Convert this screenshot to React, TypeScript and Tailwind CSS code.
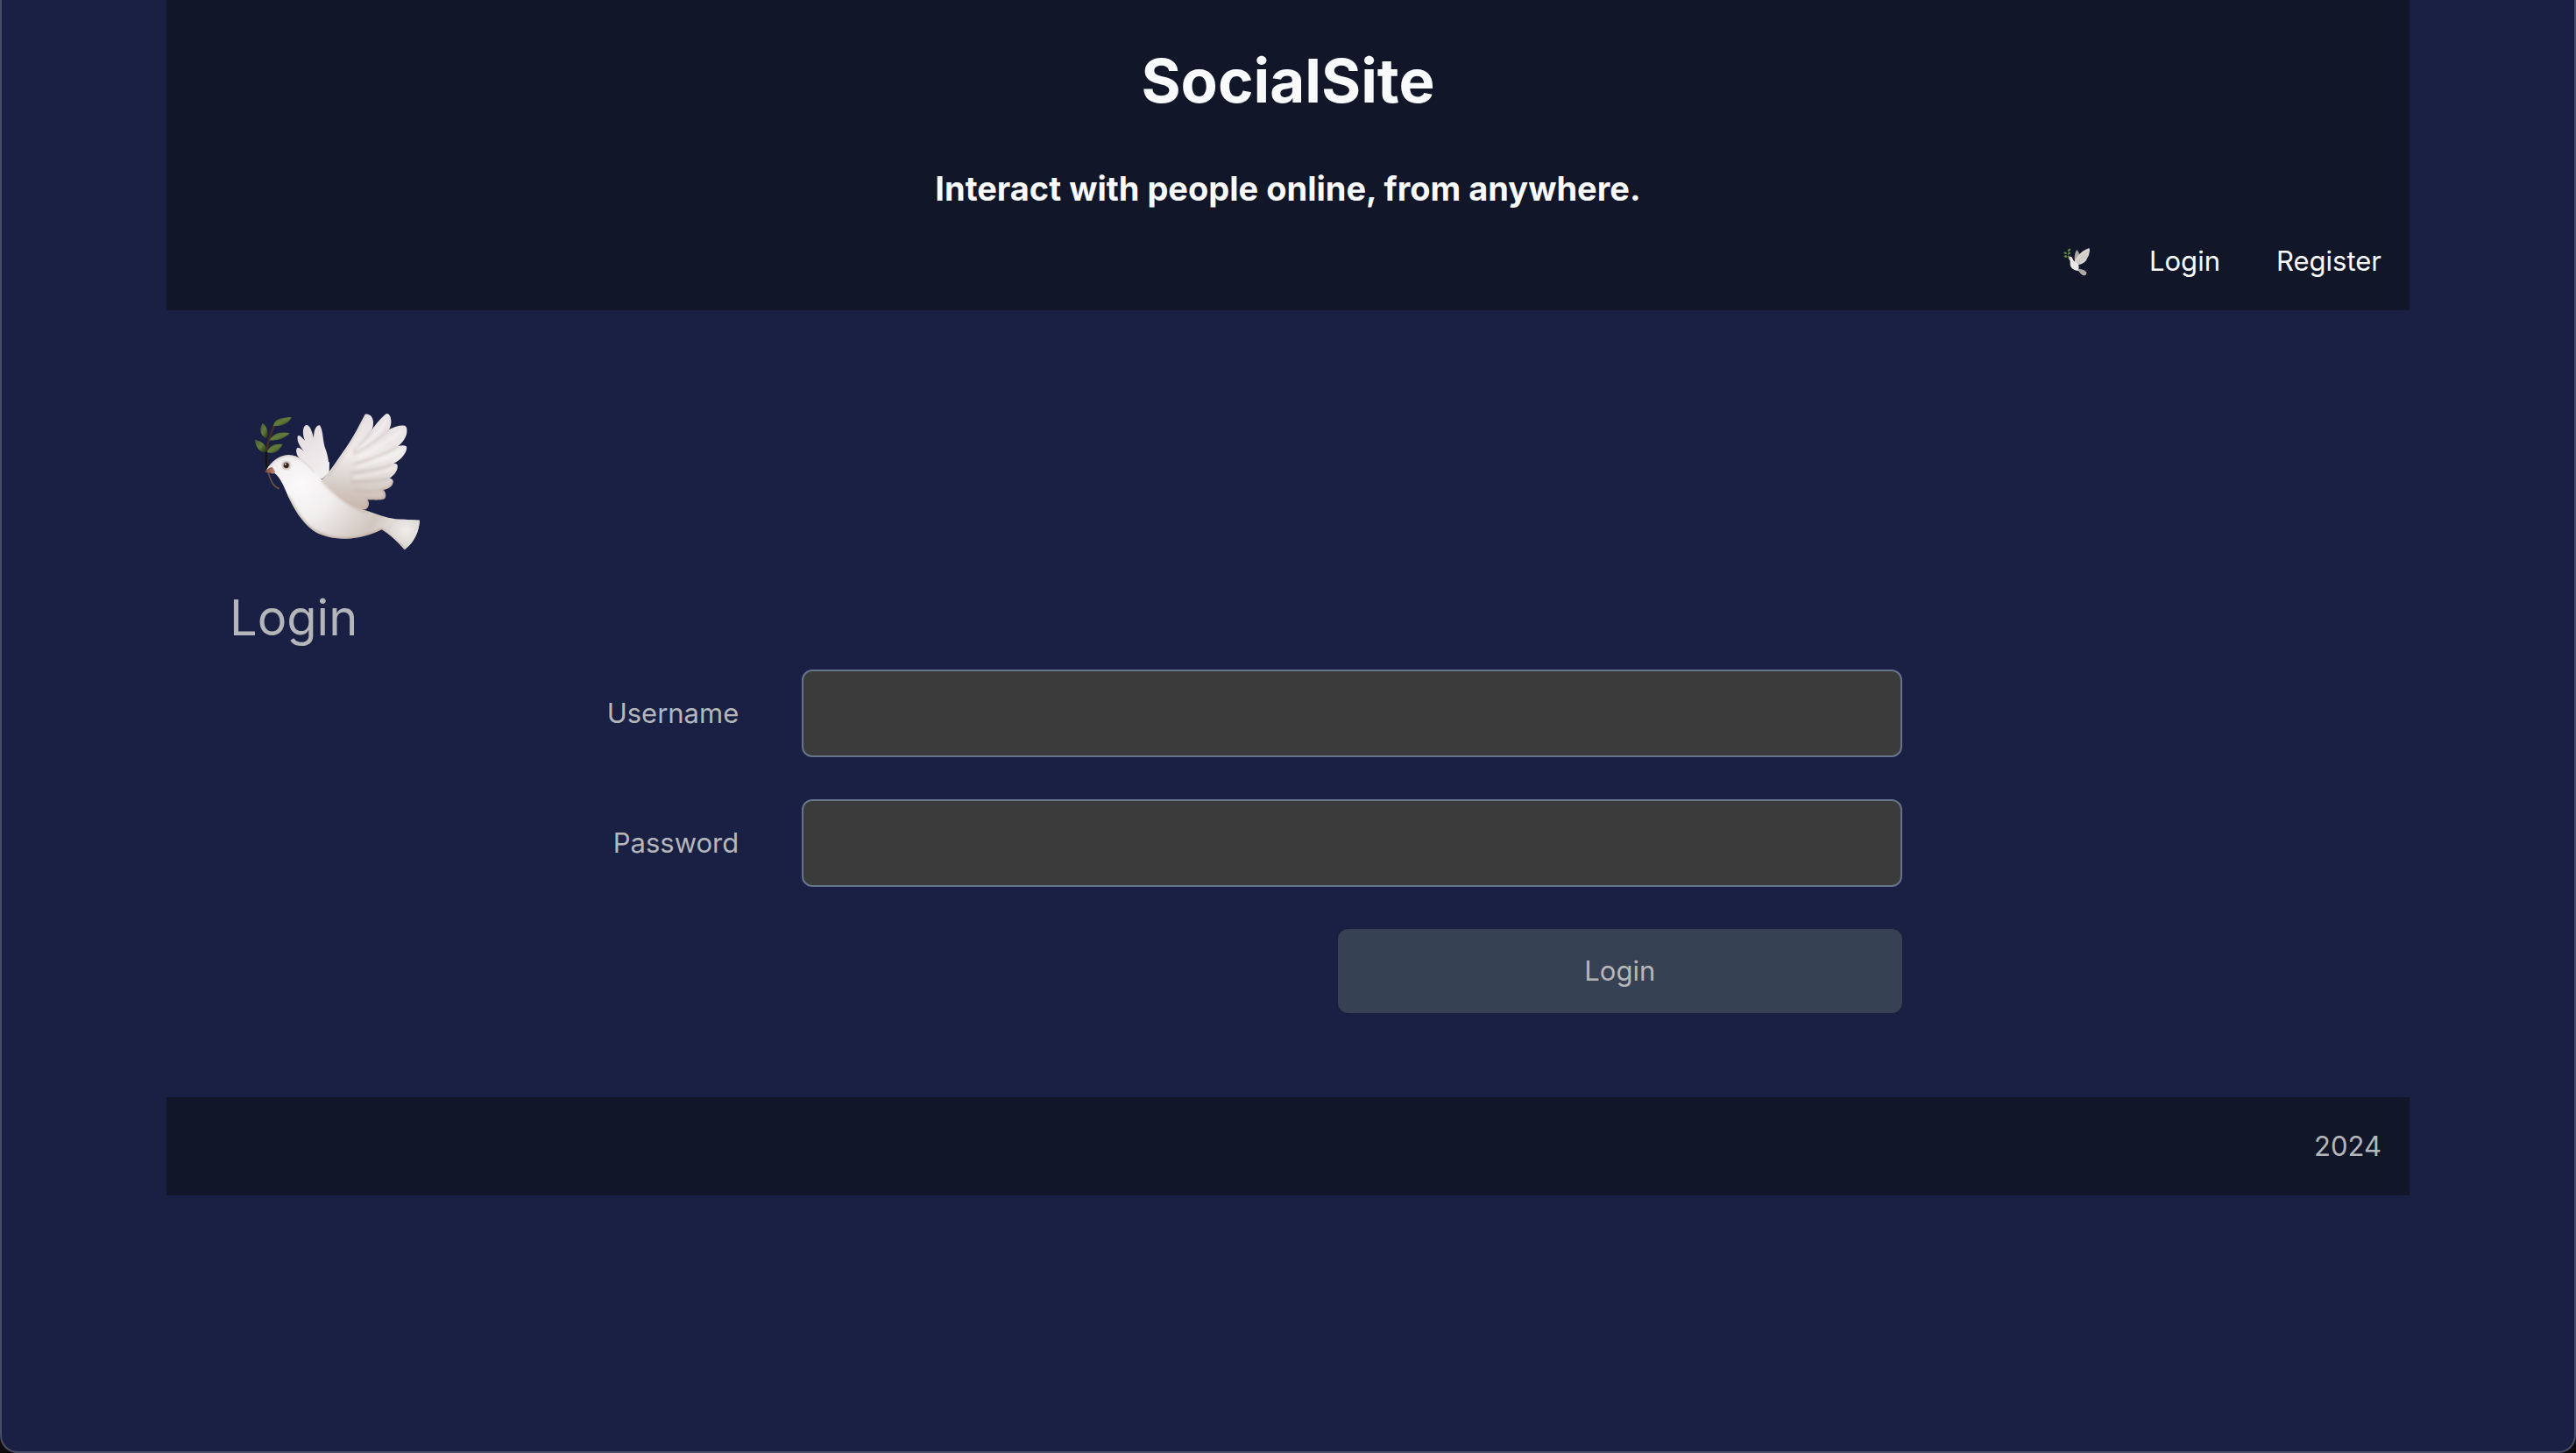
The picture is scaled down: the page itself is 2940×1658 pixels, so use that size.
import React from "react";

function DoveLarge() {
  return (
    <svg viewBox="90 90 570 480" className="h-40 w-[190px]" role="img" aria-label="Dove with olive branch">
      <defs>
        <radialGradient id="body" gradientUnits="userSpaceOnUse" cx="250" cy="340" r="330">
          <stop offset="0" stopColor="#fbf9fa" />
          <stop offset="0.35" stopColor="#f1eeee" />
          <stop offset="0.65" stopColor="#dcd4d0" />
          <stop offset="0.85" stopColor="#d2c7c0" />
          <stop offset="1" stopColor="#dedad6" />
        </radialGradient>
        <linearGradient id="wing" gradientUnits="userSpaceOnUse" x1="470" y1="120" x2="440" y2="425">
          <stop offset="0" stopColor="#e9e3e5" />
          <stop offset="0.4" stopColor="#efebea" />
          <stop offset="0.7" stopColor="#d9d0cb" />
          <stop offset="1" stopColor="#c6b6aa" />
        </linearGradient>
        <linearGradient id="backWing" x1="0" y1="0" x2="0.5" y2="1">
          <stop offset="0" stopColor="#e2dade" />
          <stop offset="1" stopColor="#f1eeee" />
        </linearGradient>
        <radialGradient id="tail" gradientUnits="userSpaceOnUse" cx="610" cy="495" r="85">
          <stop offset="0" stopColor="#efedea" />
          <stop offset="0.6" stopColor="#dedad6" />
          <stop offset="1" stopColor="#cfc5be" stopOpacity="0" />
        </radialGradient>
        <linearGradient id="leaf" x1="0" y1="0" x2="1" y2="1">
          <stop offset="0" stopColor="#3f5a2a" />
          <stop offset="0.5" stopColor="#647d3c" />
          <stop offset="1" stopColor="#1c2e0c" />
        </linearGradient>
        <linearGradient id="beak" x1="0" y1="0" x2="1" y2="0">
          <stop offset="0" stopColor="#7b4230" />
          <stop offset="1" stopColor="#c08a76" />
        </linearGradient>
        <filter id="soft" x="-20%" y="-20%" width="140%" height="140%">
          <feGaussianBlur stdDeviation="5" />
        </filter>
        <clipPath id="wingClip">
          <path d="M322 322C350 295 378 250 405 212C430 176 452 132 470 98C484 94 499 106 498 128C498 138 495 147 493 152C508 130 527 108 542 97C552 93 561 108 559 128C558 138 555 145 552 150C572 140 592 134 606 137C618 144 615 164 606 181C600 192 591 201 582 208C594 204 604 203 611 208C616 218 608 234 594 248C585 257 575 263 566 268C574 266 580 267 581 274C583 290 572 305 553 318C560 317 566 321 566 329C566 342 552 354 532 357C540 362 544 377 537 387C520 394 500 390 478 391C486 400 484 417 472 424C440 430 405 412 370 385C345 365 328 340 322 322Z" />
        </clipPath>
        <clipPath id="bodyClip">
          <path d="M131 290C150 258 176 238 208 237C240 238 262 256 288 284C315 312 345 350 385 385C415 407 450 424 478 429C510 440 540 452 575 457L657 461C655 500 638 537 605 562C590 545 570 520 527 493C490 512 445 524 405 524C360 525 315 513 290 494C255 468 228 425 207 380C195 352 180 314 160 300Z" />
        </clipPath>
      </defs>
      <path d="M133 224C132 260 134 290 143 312C150 333 160 348 176 353" fill="none" stroke="#6b543c" strokeWidth="5" />
      <path d="M132 222C131 248 132 272 136 292" fill="none" stroke="#17120d" strokeWidth="8" />
      <path d="M133 224C138 190 146 160 160 138" fill="none" stroke="#4a2d22" strokeWidth="7" />
      <g fill="url(#leaf)">
        <path d="M156 138C158 118 174 110 218 108C210 128 190 140 156 138Z" />
        <path d="M119 128C137 143 140 162 133 182C112 172 106 150 119 128Z" />
        <path d="M212 163C180 156 154 164 143 187C168 190 194 182 212 163Z" />
        <path d="M93 185C118 190 132 204 133 227C112 232 95 214 93 185Z" />
        <path d="M187 201C160 198 142 206 134 228C158 236 176 226 187 201Z" />
      </g>
      <path d="M348 262L347 298L322 320C298 304 268 274 240 242C232 228 233 214 240 212C247 212 254 220 260 224C246 208 236 190 239 174C244 165 254 178 264 188C254 165 256 140 268 135C281 134 288 155 294 180C294 155 301 135 315 136C326 152 324 180 332 210C339 228 343 242 345 262Z" fill="url(#backWing)" />
      <g clipPath="url(#wingClip)">
        <path d="M310 90H630V440H310Z" fill="url(#wing)" />
        <g fill="none" stroke="#b9a89f" strokeOpacity="0.4" strokeWidth="7" filter="url(#soft)">
          <path d="M494 152C478 177 456 204 430 225" />
          <path d="M553 150C520 182 480 208 430 235" />
          <path d="M582 208C545 232 495 250 430 270" />
          <path d="M566 268C530 284 480 292 420 300" />
          <path d="M553 318C520 326 470 330 420 330" />
          <path d="M532 357C500 366 470 365 430 356" />
          <path d="M345 305C380 265 430 180 470 98" />
        </g>
        <g fill="none" stroke="#ffffff" strokeOpacity="0.4" strokeWidth="9" filter="url(#soft)">
          <path d="M545 115C525 155 480 195 440 220" />
          <path d="M595 155C555 190 500 220 445 247" />
          <path d="M598 220C550 248 500 265 440 280" />
          <path d="M570 282C530 300 480 310 430 314" />
        </g>
        <path d="M566 325C566 345 550 355 532 357C544 370 540 385 530 389L478 391C486 405 482 420 470 424" fill="none" stroke="#b2917b" strokeOpacity="0.7" strokeWidth="6" filter="url(#soft)" />
      </g>
      <g clipPath="url(#bodyClip)">
        <path d="M120 220H670V580H120Z" fill="url(#body)" />
        <path d="M527 493C555 470 580 450 657 455V570H600Z" fill="url(#tail)" />
        <path d="M207 380C228 425 255 468 290 494C330 520 370 526 405 524C445 524 490 512 527 493L605 562" fill="none" stroke="#a8937f" strokeOpacity="0.7" strokeWidth="8" filter="url(#soft)" />
        <path d="M322 322C345 352 385 385 420 408C440 420 460 426 480 430" fill="none" stroke="#bba798" strokeOpacity="0.55" strokeWidth="10" filter="url(#soft)" />
        <path d="M140 275C160 248 190 236 215 238C250 242 275 270 300 295" fill="none" stroke="#b9a49b" strokeOpacity="0.7" strokeWidth="5" filter="url(#soft)" />
      </g>
      <path d="M126 296C134 285 144 279 153 279C155 286 162 290 162 297C160 304 152 302 146 299C139 297 132 298 126 296Z" fill="url(#beak)" />
      <circle cx="200" cy="273" r="12" fill="#9a8271" filter="url(#soft)" />
      <circle cx="200" cy="273" r="9" fill="#33211a" />
      <circle cx="197" cy="269" r="3" fill="#f5efeb" />
    </svg>
  );
}

function DoveSmall() {
  return (
    <svg viewBox="164 88 108 108" className="size-9" role="img" aria-label="Home">
      <path d="M190 136C186 126 184 112 192 101" fill="none" stroke="#4c6440" strokeWidth="3" />
      <g fill="#64854b">
        <path d="M184 108C184 101 190 98 195 100C195 106 190 110 184 108Z" />
        <path d="M171 112C176 109 181 112 182 117C176 119 172 117 171 112Z" />
        <path d="M184 117C187 112 192 111 195 113C194 119 189 121 184 117Z" />
        <path d="M171 124C176 120 182 122 184 127C180 132 173 130 171 124Z" />
        <path d="M184 127C187 123 190 122 193 124C193 130 189 132 184 127Z" />
      </g>
      <path d="M208 138C207 124 210 110 216 103C222 110 226 118 226 126L212 144Z" fill="#aaa6a3" />
      <path d="M206 146C212 130 224 117 236 108C245 102 252 100 258 97C261 102 260 110 258 116C258 122 255 126 252 130C250 138 244 145 237 149C230 154 222 154 215 154Z" fill="#d8d5d1" />
      <path d="M214 148C226 134 242 120 256 108M218 150C232 142 244 132 253 122" fill="none" stroke="#b5b0ab" strokeWidth="2" />
      <path d="M188 131C191 126 198 126 201 132C203 140 208 145 217 149C223 153 224 163 222 169C232 170 244 173 249 181C248 187 246 191 241 191C234 190 228 183 222 175C208 174 194 166 193 153C193 145 195 139 188 135Z" fill="#ebe9e7" />
      <path d="M222 169C232 170 244 173 249 181C248 187 246 191 241 191C234 190 228 183 222 175Z" fill="#aca7a3" />
      <path d="M187 135L193 130L194 136Z" fill="#a3857b" />
    </svg>
  );
}

function Field({ id, label, type }: { id: string; label: string; type: string }) {
  return (
    <>
      <label htmlFor={id} className="text-right">
        {label}
      </label>
      <input
        id={id}
        name={id}
        type={type}
        className="h-[100px] w-full rounded-xl border-2 border-[#64748b] bg-[#3b3b3b] px-6 outline-none"
      />
      <span />
    </>
  );
}

export default function App() {
  return (
    <div className="min-h-screen bg-[#0d0b0c]">
      <div className="min-h-screen rounded-b-[20px] border-x-2 border-b-2 border-[#494e68] bg-[#1a2044] font-['Inter',sans-serif] text-[31px] leading-[48px] text-[#b5b6ba]">
        <div className="mx-auto max-w-[2560px]">
          <header className="bg-[#111628] px-8 pt-[52px] pb-8 text-[#f9fafc]">
            <h1 className="text-center text-[69px] leading-[80px] font-bold">SocialSite</h1>
            <h2 className="mt-14 text-center text-[38px] leading-[54px] font-bold">
              Interact with people online, from anywhere.
            </h2>
            <nav className="mt-8 flex items-center justify-end gap-16">
              <a href="#home">
                <DoveSmall />
              </a>
              <a href="#login">Login</a>
              <a href="#register">Register</a>
            </nav>
          </header>
          <main className="px-[72px] pt-[116px] pb-24">
            <div className="pl-7">
              <DoveLarge />
            </div>
            <h3 className="mt-10 text-[56px] leading-[70px]">Login</h3>
            <form
              className="mt-6 grid grid-cols-[581fr_1255fr_435fr] items-center gap-x-[72px] gap-y-12"
              onSubmit={(e: React.FormEvent) => e.preventDefault()}
            >
              <Field id="username" label="Username" type="text" />
              <Field id="password" label="Password" type="password" />
              <button
                type="submit"
                className="col-start-2 h-24 w-[644px] justify-self-end rounded-xl bg-[#364153]"
              >
                Login
              </button>
            </form>
          </main>
          <footer className="bg-[#111628] p-8 text-right">2024</footer>
        </div>
      </div>
    </div>
  );
}
